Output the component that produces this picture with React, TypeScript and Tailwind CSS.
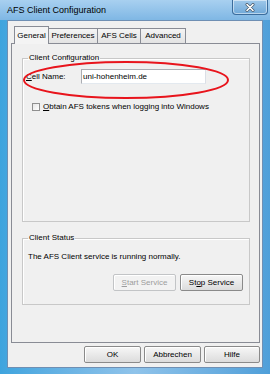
import React from "react";

const ui = "font-['Liberation_Sans',Arial,sans-serif]";

const Btn: React.FC<{ label: React.ReactNode; disabled?: boolean; className?: string }> = ({
  label,
  disabled,
  className = "",
}) => (
  <button
    disabled={disabled}
    className={`h-[17px] rounded-[2px] border ${
      disabled
        ? "border-[#c2c4c6] text-[#9d9d9d] bg-[#f2f2f2]"
        : "border-[#8a8a8a] text-black bg-gradient-to-b from-[#f7f7f7] to-[#dcdcdc]"
    } shadow-[inset_1px_1px_0_#fff] text-[8px] leading-none ${className}`}
  >
    {label}
  </button>
);

const tabs = [
  { name: "General", w: "w-[35px]" },
  { name: "Preferences", w: "w-[50px]" },
  { name: "AFS Cells", w: "w-[44px]" },
  { name: "Advanced", w: "w-[46px]" },
];

export default function App() {
  return (
    <div
      className={`w-[270px] h-[374px] flex flex-col overflow-hidden bg-gradient-to-r from-[#3ea4de] via-[#8fc3ea] to-[#4f9fd9] ${ui}`}
    >
      {/* Title bar */}
      <div className="h-[20px] flex justify-between shrink-0 bg-gradient-to-b from-[#a8d0f0] to-[#7fb7e4]">
        <span className="pl-[7px] pt-[5px] text-[9px] leading-[10px] text-black">
          AFS Client Configuration
        </span>
        <div className="mr-[2px] w-[36px] h-[15px] rounded-b-[4px] border border-t-0 border-[#3b6c9c] bg-gradient-to-b from-[#9fc8ea] to-[#6fa8d8] shadow-[inset_0_0_0_1px_rgba(255,255,255,0.5)] flex items-center justify-center">
          <svg width="10" height="9" viewBox="0 0 10 9">
            <path d="M2 1.5 L8 7.5 M8 1.5 L2 7.5" stroke="#4a5a6a" strokeWidth="3" strokeLinecap="round" />
            <path d="M2 1.5 L8 7.5 M8 1.5 L2 7.5" stroke="#ffffff" strokeWidth="1.6" strokeLinecap="round" />
          </svg>
        </div>
      </div>

      {/* Window body */}
      <div className="mx-[7px] mb-[6px] flex-1 flex flex-col bg-[#f0f0f0] border border-[#6f8fb3] pt-[4px] pl-[3px] pr-[2px]">
        {/* Tabs */}
        <div className="flex items-end h-[18px] pl-[3px] relative z-10">
          {tabs.map((t, i) =>
            i === 0 ? (
              <div
                key={t.name}
                className={`${t.w} h-[18px] -mb-px bg-[#f4f4f4] border border-b-0 border-[#898c95] flex items-center justify-center text-[8px]`}
              >
                {t.name}
              </div>
            ) : (
              <div
                key={t.name}
                className={`${t.w} h-[15px] -ml-px border border-b-0 border-[#898c95] bg-gradient-to-b from-[#f4f4f4] to-[#e3e3e3] flex items-center justify-center text-[8px]`}
              >
                {t.name}
              </div>
            )
          )}
        </div>

        {/* Tab page */}
        <div className="h-[300px] border border-[#898c95] bg-[#f0f0f0] pt-[9px] pl-[10px] pr-[9px] flex flex-col">
          <fieldset className="relative h-[169px] border border-[#c8c8c8] shadow-[inset_1px_1px_0_#fff] pl-[3px]">
            <legend className="ml-[2px] px-[1px] text-[8px] leading-[10px]">Client Configuration</legend>
            <div className="flex items-center mt-[6px] h-[15px]">
              <span className="text-[8px] w-[55px]">
                <span className="underline">C</span>ell Name:
              </span>
              <div className="w-[125px] h-[15px] bg-white border border-[#abadb3] border-b-[#e3e9ef] border-r-[#dbdfe6] pl-[1px] text-[8px] leading-[13px]">
                uni-hohenheim.de
              </div>
            </div>
            <div className="flex items-center mt-[18px] ml-[6px] gap-[3px]">
              <div className="w-[8px] h-[8px] border border-[#8f8f8f] bg-gradient-to-br from-[#e6e6e6] to-white" />
              <span className="text-[8px] leading-[10px]">
                <span className="underline">O</span>btain AFS tokens when logging into Windows
              </span>
            </div>
            {/* red highlight ellipse */}
            <svg
              className="absolute left-[-1px] top-[-3px] pointer-events-none"
              width="210"
              height="42"
              viewBox="0 0 210 42"
            >
              <ellipse cx="104" cy="20" rx="102" ry="18" fill="none" stroke="#e8141c" strokeWidth="2" />
            </svg>
          </fieldset>

          <fieldset className="mt-[11px] h-[72px] border border-[#c8c8c8] shadow-[inset_1px_1px_0_#fff] pl-[5px] pr-[6px] flex flex-col">
            <legend className="ml-[0px] px-[1px] text-[8px] leading-[10px]">Client Status</legend>
            <div className="mt-[9px] text-[8px] leading-[10px]">The AFS Client service is running normally.</div>
            <div className="flex justify-end gap-[4px] mt-[12px]">
              <Btn disabled className="w-[63px]" label={<><span className="underline">S</span>tart Service</>} />
              <Btn className="w-[63px]" label={<>St<span className="underline">o</span>p Service</>} />
            </div>
          </fieldset>
        </div>

        {/* Dialog buttons */}
        <div className="flex justify-end gap-[3px] mt-[3px] pr-[0px]">
          <Btn className="w-[57px]" label="OK" />
          <Btn className="w-[57px]" label="Abbrechen" />
          <Btn className="w-[56px]" label="Hilfe" />
        </div>
      </div>
    </div>
  );
}
